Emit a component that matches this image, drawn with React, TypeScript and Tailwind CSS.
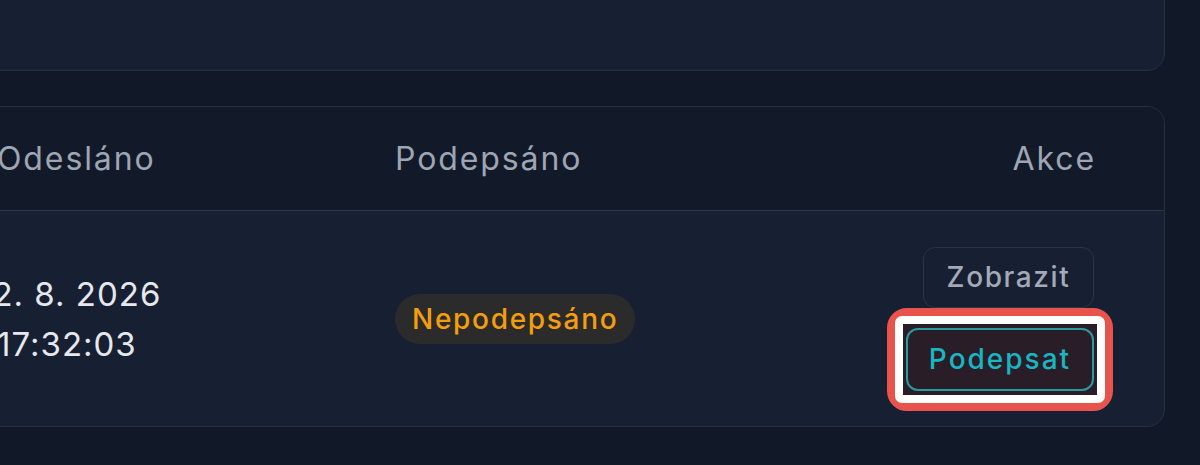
import React from "react";

export default function App() {
  return (
    <div
      className="w-[1200px] h-[465px] overflow-hidden bg-[#111827] pr-[35px]"
      style={{ fontFamily: "Inter, 'Noto Sans', sans-serif" }}
    >
      <div className="-ml-[60px] flex flex-col">
        <div className="-mt-[130px] h-[201px] rounded-[18px] border border-[#263041] bg-[#172033]" />
        <div className="mt-[35px] overflow-hidden rounded-[18px] border border-[#263041] bg-[#172033]">
          <div className="flex h-[104px] items-center border-b border-[#2a3546] bg-[#121a29] pl-[56px] pr-[70px] text-[32px] text-[#9ea5b3] tracking-[1.9px]">
            <div className="w-[398px]">Odesláno</div>
            <div className="flex-1">Podepsáno</div>
            <div className="-mr-[2px]">Akce</div>
          </div>
          <div className="flex h-[215px] items-center pl-[56px] pr-[70px]">
            <div className="w-[398px] text-[33px] leading-[50px] text-[#e6e8ec] tracking-[1px]">
              <div className="ml-[3px]">
                <span className="-ml-[22px] inline-block">1</span>2. 8. 2026
              </div>
              <div>17:32:03</div>
            </div>
            <div className="flex-1">
              <span className="inline-flex h-[50px] items-center rounded-full bg-[#2c2b2b] px-[17px] text-[28px] font-medium text-[#f59e0b] tracking-[1.7px]">
                Nepodepsáno
              </span>
            </div>
            <div className="flex flex-col items-end gap-[20px]">
              <button className="h-[61px] w-[171px] rounded-[12px] border border-[#2a3443] text-[28px] font-medium text-[#a3a9b6] tracking-[1.6px]">
                Zobrazit
              </button>
              <div className="relative">
                <div className="absolute -inset-x-[19px] -inset-y-[20px] rounded-[20px] border-[8px] border-[#e8544b]">
                  <div className="h-full w-full rounded-[7px] border-[8px] border-white bg-[#291e28]" />
                </div>
                <button className="relative h-[63px] w-[188px] rounded-[12px] border-2 border-[#2a9a9f] text-[28px] font-medium text-[#18b5c2] tracking-[2px]">
                  Podepsat
                </button>
              </div>
            </div>
          </div>
        </div>
      </div>
    </div>
  );
}
